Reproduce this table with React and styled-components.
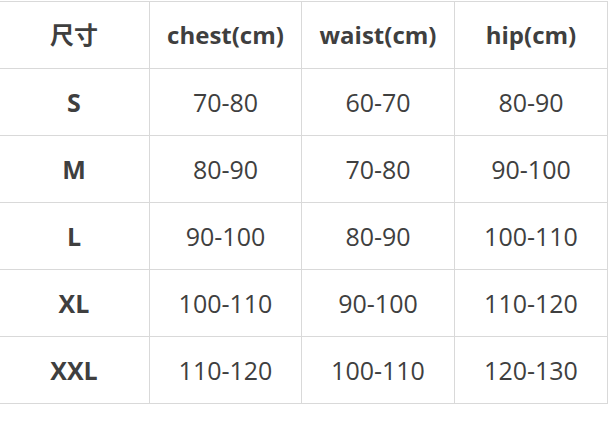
import React from "react";
import styled, { createGlobalStyle } from "styled-components";

const GlobalStyle = createGlobalStyle`
  html, body {
    margin: 0;
    padding: 0;
    background: #ffffff;
    overflow: hidden;
  }
`;

const Page = styled.div`
  width: 614px;
  height: 422px;
  padding-top: 1px;
  box-sizing: border-box;
`;

const SizeTable = styled.table`
  margin-left: -2px;
  border-collapse: collapse;
  table-layout: fixed;
  font-family: "Open Sans", "Noto Sans CJK SC", sans-serif;
  color: #3f3f3f;
`;

const Cell = styled.td`
  width: ${p => p.$w}px;
  height: 66px;
  padding: 0;
  border: 1px solid #d9d9d9;
  text-align: center;
  vertical-align: middle;
  font-size: ${p => (p.$head ? 24 : 25)}px;
  font-weight: ${p => (p.$bold ? 700 : 400)};
  line-height: 1;
`;

const widths = [150, 151, 152, 152];

const header = ["尺寸", "chest(cm)", "waist(cm)", "hip(cm)"];

const rows = [
  ["S", "70-80", "60-70", "80-90"],
  ["M", "80-90", "70-80", "90-100"],
  ["L", "90-100", "80-90", "100-110"],
  ["XL", "100-110", "90-100", "110-120"],
  ["XXL", "110-120", "100-110", "120-130"]
];

export default function App() {
  return (
    <Page>
      <GlobalStyle />
      <SizeTable>
        <tbody>
          <tr>
            {header.map((h, i) => (
              <Cell key={h} $w={widths[i]} $bold $head>
                {h}
              </Cell>
            ))}
          </tr>
          {rows.map(row => (
            <tr key={row[0]}>
              {row.map((v, i) => (
                <Cell key={i} $w={widths[i]} $bold={i === 0}>
                  {v}
                </Cell>
              ))}
            </tr>
          ))}
        </tbody>
      </SizeTable>
    </Page>
  );
}
